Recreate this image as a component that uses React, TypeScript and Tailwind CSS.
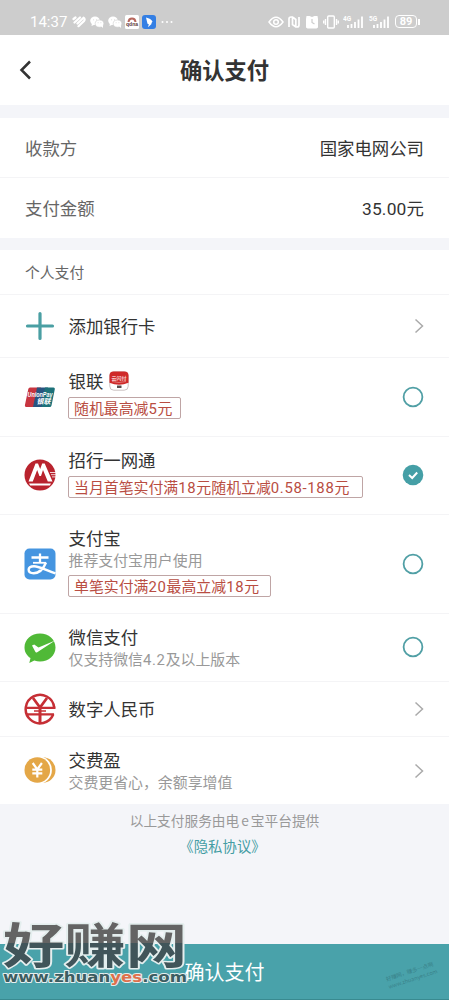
import React, { useState } from "react";

type Method = {
  id: string;
  name: string;
  desc?: string;
  tag?: string;
  tagWidth?: string;
  height: string;
  link?: boolean;
  icon: React.ReactNode;
};

function PlusIcon() {
  return (
    <svg viewBox="0 0 32 32" className="h-8 w-8">
      <path d="M16 3.500v25M3.500 16h25" stroke="#4a9fa3" strokeWidth="3.200" strokeLinecap="round" />
    </svg>
  );
}

function UnionPayIcon() {
  return (
    <svg viewBox="0 0 32 32" className="-mt-px h-8 w-8">
      <path d="M6 6.500h11l-4.500 19.500H2.200q-1.700 0-1.300-1.700L4.300 8q.4-1.500 1.700-1.500z" fill="#c73540" />
      <path d="M13 6.500h11l-5 19.500H9z" fill="#285480" />
      <path d="M21 6.500h8.500q1.700 0 1.300 1.700L27.500 24.500q-.4 1.500-1.700 1.500H17.500z" fill="#1c7179" />
      <text x="3.500" y="15.500" fontSize="7" fontWeight="700" fontStyle="italic" fill="#fff" fontFamily="Liberation Sans, sans-serif" textLength="25" lengthAdjust="spacingAndGlyphs">UnionPay</text>
      <text x="12.500" y="22.500" fontSize="7" fontWeight="700" fontStyle="italic" fill="#fff" fontFamily="'Noto Sans CJK SC', sans-serif">银联</text>
    </svg>
  );
}

function CmbIcon() {
  return (
    <svg viewBox="0 0 32 32" className="-mt-px h-8 w-8">
      <circle cx="16" cy="16" r="15.500" fill="#b9232e" />
      <path d="M26 13.500h6M27 15.700h5M28 17.900h4" stroke="#fff" strokeWidth=".8" />
      <path d="M4.500 22.500 11.500 4.500H14l2.200 5.500 2-5.500h2.500l7.800 18h-4.700L19 11l-2 6h-1.600l-2.200-6-4.400 11.500z" fill="#fff" />
      <path d="M12.800 13.500 9.600 22.200H15zM19 13.500l-2.200 8.700h5.500z" fill="#b9232e" />
      <path d="M5 24.600h22l-1.200 1.900H6.200z" fill="#fff" />
    </svg>
  );
}

function AlipayIcon() {
  return (
    <svg viewBox="0 0 32 32" className="h-8 w-8">
      <rect x=".5" y=".5" width="31" height="31" rx="5" fill="#4595e0" />
      <g fill="none" stroke="#fff" strokeLinecap="butt">
        <path d="M7.500 9.500h17M16 5.500v9.500" strokeWidth="2.300" />
        <path d="M9 14.800h13" strokeWidth="1.800" />
        <path d="M22 14.500c-2 5-5.500 10.700-12.300 10.700-6.400 0-7.200-7 .3-7 5.500 0 12 4 21.500 7.200" strokeWidth="2.400" />
      </g>
    </svg>
  );
}

function WechatPayIcon() {
  return (
    <svg viewBox="0 0 32 32" className="h-8 w-8">
      <path d="M16 1.500C7.300 1.500.5 7.500.5 15.500c0 4.400 2.300 8.200 6 10.600L5.300 31l5-2.400c1.800.6 3.700.9 5.700.9 8.700 0 15.500-6 15.500-14S24.700 1.500 16 1.500z" fill="#50b937" />
      <path d="m8 13.500 2.200-1 4.300 3L31.200 8.500 13.200 20.200q-1.400.7-2-.6z" fill="#fff" />
    </svg>
  );
}

function DigitalYuanIcon() {
  return (
    <svg viewBox="0 0 32 32" className="h-8 w-8" fill="none" stroke="#c62f35">
      <path d="M30.200 14.500A14.300 14.300 0 1 0 29.300 21.300" strokeWidth="2.500" />
      <path d="M9 5 16 14.500 23 5" strokeWidth="2.800" />
      <path d="M2.500 14.800h29M3 21.300h27" strokeWidth="2.300" />
      <path d="M10 18h12" strokeWidth="1.500" />
      <path d="M16 12.500V30" strokeWidth="3" />
      <path d="M24 18h8" stroke="#fff" strokeWidth="1.800" />
    </svg>
  );
}

function CoinIcon() {
  return (
    <svg viewBox="0 0 32 32" className="-mt-px h-8 w-8">
      <circle cx="18.700" cy="16" r="12.800" fill="#e4a747" />
      <circle cx="13.900" cy="16" r="14" fill="#fff" />
      <circle cx="13.300" cy="16" r="12.800" fill="#e4a747" />
      <path d="m8.700 9 4.600 6.300L17.900 9M13.300 15v8.500M8.300 15.700h10M8.300 19.300h10" fill="none" stroke="#fff" strokeWidth="2.200" />
    </svg>
  );
}

function RedPacketIcon() {
  return (
    <svg viewBox="0 0 20 20" className="-mt-px h-5 w-5">
      <rect x=".8" y=".8" width="18.400" height="18.400" rx="4" fill="#fff" stroke="#b4a6a6" strokeWidth=".7" />
      <path d="M4.500.5h11q4 0 4 4v7.200Q10 16 .5 11.700V4.500q0-4 4-4z" fill="#cf2929" />
      <text x="2.500" y="8.500" fontSize="5" fontWeight="700" fill="#f6cccc" fontFamily="'Noto Sans CJK SC', sans-serif">云闪付</text>
      <path d="M3 10.500q7 2 14 0" fill="none" stroke="#eba8a5" strokeWidth=".6" />
      <path d="M8 14.500h4.500V17H8z" fill="#594c4c" />
    </svg>
  );
}

const methods: Method[] = [
  { id: "add", name: "添加银行卡", height: "h-[63px]", link: true, icon: <PlusIcon /> },
  { id: "unionpay", name: "银联", tag: "随机最高减5元", tagWidth: "w-[113px]", height: "h-[79px]", icon: <UnionPayIcon /> },
  { id: "cmb", name: "招行一网通", tag: "当月首笔实付满18元随机立减0.58-188元", tagWidth: "w-[295px]", height: "h-[78px]", icon: <CmbIcon /> },
  { id: "alipay", name: "支付宝", desc: "推荐支付宝用户使用", tag: "单笔实付满20最高立减18元", tagWidth: "w-[203px]", height: "h-[99px]", icon: <AlipayIcon /> },
  { id: "wechat", name: "微信支付", desc: "仅支持微信4.2及以上版本", height: "h-[68px]", icon: <WechatPayIcon /> },
  { id: "ecny", name: "数字人民币", height: "h-[55px]", link: true, icon: <DigitalYuanIcon /> },
  { id: "jfy", name: "交费盈", desc: "交费更省心，余额享增值", height: "h-[68px]", link: true, icon: <CoinIcon /> },
];

// Numbers use a narrower face with wider tracking than the Chinese text
function Mixed({ text }: { text: string }) {
  return (
    <>
      {text.split(/([\d.-]+)/).map((part, i) =>
        i % 2 ? (
          <span key={i} className="font-[Roboto] tracking-[0.045em]">{part}</span>
        ) : (
          part
        )
      )}
    </>
  );
}

function WechatGlyph() {
  return (
    <svg viewBox="0 0 14 12" className="h-3 w-3.5">
      <ellipse cx="5" cy="4.800" rx="4.800" ry="4.200" fill="#fff" />
      <path d="m2 7-.5 3L5 8.500z" fill="#fff" />
      <ellipse cx="9.500" cy="7.600" rx="4.300" ry="3.600" fill="#fff" stroke="#cdcdcd" strokeWidth=".6" />
      <path d="m11 10 2 2v-3z" fill="#fff" />
      <path d="M3.200 3.800h.9M6 3.800h.9M7.700 6.700h.8M10.500 6.700h.8" stroke="#ccc" strokeWidth=".7" />
    </svg>
  );
}

function Signal({ label }: { label: string }) {
  return (
    <svg viewBox="0 0 22 16" className="h-4 w-[22px]" fill="none" stroke="#fff">
      <text x="0" y="6.500" fontSize="6.500" fontWeight="700" fill="#fff" stroke="none" fontFamily="Roboto, sans-serif">{label}</text>
      <path d="M5 11v3M8.500 10v4M12 8v6M15.500 5.500V14M19 2.500V14" strokeWidth="1.800" />
    </svg>
  );
}

function StatusBar() {
  return (
    <div className="flex h-[35px] items-center justify-between bg-[#cdcdcd] pt-2 pr-[29px] pl-[30px] text-white">
      <div className="flex items-center gap-[4px]">
        <span className="w-[38px] font-[Roboto] text-[15px] leading-4">14:37</span>
        <svg viewBox="0 0 14 12" className="h-3 w-3.5" fill="none" stroke="#fff" strokeWidth="2.200" strokeLinecap="round">
          <path d="M1.500 3 3.500 1.500M2.500 6.500 8 1.500M6.500 10.200 12 5Q13.500 3 11.500 1.800L5.500 7.500" />
        </svg>
        <WechatGlyph />
        <WechatGlyph />
        <svg viewBox="0 0 14 14" className="-ml-px h-3.5 w-3.5">
          <rect width="14" height="14" rx="1.500" fill="#fff" />
          <path d="M3.500 7q.3-3.500 3.500-3.500T10.500 7" fill="none" stroke="#b7685e" strokeWidth="2" />
          <text x="1" y="10.500" fontSize="6" fontWeight="700" fill="#5c3a3a" fontFamily="Liberation Sans, sans-serif" textLength="12" lengthAdjust="spacingAndGlyphs">qdna</text>
        </svg>
        <svg viewBox="0 0 14 14" className="-ml-px h-3.5 w-3.5">
          <rect width="14" height="14" rx="3" fill="#347fe4" />
          <path d="M4 2.500q5 1 6.500 4L9.200 8.500l.6.300L6 12.200l.8-3L5.500 8.700z" fill="#fff" />
        </svg>
        <svg viewBox="0 0 12 4" className="ml-px h-1 w-3" fill="#fff">
          <circle cx="1.500" cy="2" r="1" />
          <circle cx="6" cy="2" r="1" />
          <circle cx="10.500" cy="2" r="1" />
        </svg>
      </div>
      <div className="flex items-center gap-[4px]">
        <svg viewBox="0 0 16 12" className="h-3 w-4" fill="none" stroke="#fff" strokeWidth="1.500">
          <path d="M1 6q7-9.500 14 0-7 9.500-14 0z" />
          <circle cx="8" cy="6" r="2.300" />
        </svg>
        <svg viewBox="0 0 12 12" className="h-3 w-3" fill="none" stroke="#fff" strokeWidth="1.700">
          <path d="M1 11V3q0-2 2-2h1.500v7.500L8 11M11 1v8q0 2-2 2H7.800V3.500L4.500 1" />
        </svg>
        <svg viewBox="0 0 14 14" className="ml-px h-3.5 w-3.5">
          <path d="M1.500 1h3L7 2l2.500-1h3L13 4v8.500l-1.500 1h-9L1 12.500V4z" fill="#fff" />
          <path d="M7 4v3.500l2.500 1.500" stroke="#cdcdcd" strokeWidth="1.200" fill="none" />
        </svg>
        <svg viewBox="0 0 16 14" className="h-3.5 w-4" fill="none" stroke="#fff" strokeWidth="1.400">
          <rect x="4.700" y="1" width="6.600" height="12" rx="1" />
          <path d="M2.500 4v6M13.500 4v6M.7 5.500v3M15.300 5.500v3" />
        </svg>
        <Signal label="4G" />
        <Signal label="5G" />
        <div className="flex items-center">
          <span className="flex h-[13px] w-[22px] items-center justify-center rounded-[4px] border border-white font-[Roboto] text-[11px] leading-none font-bold">89</span>
          <span className="ml-px h-[6px] w-[2px] bg-white" />
        </div>
      </div>
    </div>
  );
}

function Radio({ checked }: { checked: boolean }) {
  return (
    <svg viewBox="0 0 22 22" className="-mt-px h-[22px] w-[22px]">
      {checked ? (
        <>
          <circle cx="11" cy="11" r="10.300" fill="#459fa6" />
          <path d="m7 11 3.200 3 5-5.500" fill="none" stroke="#fff" strokeWidth="2" />
        </>
      ) : (
        <circle cx="11" cy="11" r="9.400" fill="#fff" stroke="#509fa5" strokeWidth="1.800" />
      )}
    </svg>
  );
}

function Chevron() {
  return (
    <svg viewBox="0 0 10 16" className="h-4 w-2.5">
      <path d="M1.500 1.500 8.500 8l-7 6.500" fill="none" stroke="#aaa" strokeWidth="1.500" />
    </svg>
  );
}

function Watermark() {
  return (
    <svg viewBox="0 0 194 90" className="pointer-events-none absolute bottom-[4px] left-0 h-[90px] w-[194px]">
      <defs>
        <linearGradient id="ink" gradientUnits="userSpaceOnUse" x1="0" y1="16" x2="0" y2="72">
          <stop offset=".47" stopColor="#646464" />
          <stop offset=".47" stopColor="#41555a" />
        </linearGradient>
      </defs>
      <g stroke="#e4eeee" strokeLinejoin="round" paintOrder="stroke">
        <text x="3" y="64.500" transform="scale(1 .88)" fontSize="54" fontWeight="700" fill="url(#ink)" strokeWidth="3.500" fontFamily="'Noto Sans CJK SC', sans-serif" textLength="184" lengthAdjust="spacingAndGlyphs">好赚网</text>
        <text x="3" y="75.500" fontSize="14" fontWeight="700" fill="#3c5d61" strokeWidth="2" fontFamily="'DejaVu Sans', sans-serif" textLength="184" lengthAdjust="spacingAndGlyphs">
          www.zhuan<tspan fill="#de704c">yes</tspan>.com
        </text>
      </g>
    </svg>
  );
}

export default function App() {
  const [selected, setSelected] = useState("cmb");

  return (
    <div className="relative flex h-[1000px] w-[449px] flex-col overflow-hidden bg-[#f4f5f9] font-['Noto_Sans_CJK_SC',sans-serif] text-[17.4px] leading-6 text-[#333]">
      <StatusBar />

      <header className="grid h-[70px] grid-cols-[60px_1fr_60px] items-center bg-white">
        <svg viewBox="0 0 14 20" className="ml-[19px] h-5 w-3.5">
          <path d="M11 1.500 2.500 10l8.500 8.500" fill="none" stroke="#333" strokeWidth="2.500" />
        </svg>
        <h1 className="pb-[2px] text-center text-[22.300px] leading-8 font-bold">确认支付</h1>
      </header>

      {/* Order summary */}
      <section className="mt-[13px] bg-white">
        <div className="flex h-[60px] items-center justify-between border-b border-[#f4f4f6] px-[25px]">
          <span className="text-[#666]">收款方</span>
          <span>国家电网公司</span>
        </div>
        <div className="flex h-[60px] items-center justify-between px-[25px]">
          <span className="text-[#666]">支付金额</span>
          <span>
            <span className="font-[Roboto] tracking-[0.2px]">35.00</span>元
          </span>
        </div>
      </section>

      {/* Payment methods */}
      <section className="mt-3 bg-white">
        <h2 className="flex h-11 items-center pl-[25px] text-[14.8px] text-[#666]">个人支付</h2>
        {methods.map((m) => (
          <div
            key={m.id}
            onClick={() => !m.link && setSelected(m.id)}
            className={`flex items-center border-t border-[#f4f4f6] pr-[25px] pl-6 ${m.height}`}
          >
            {m.icon}
            <div className={`ml-3 flex flex-1 flex-col ${m.tag ? "pb-[6px]" : ""}`}>
              <div className="flex h-6 items-center gap-1.5 pl-[0.5px]">
                {m.name}
                {m.id === "unionpay" && <RedPacketIcon />}
              </div>
              {m.desc && (
                <div className="h-[21px] pl-[0.5px] text-[14.9px] leading-5 text-[#999]">
                  <Mixed text={m.desc} />
                </div>
              )}
              {m.tag && (
                <div className={`mt-[4px] h-[22px] rounded-[2px] border border-[#bfa5a5] pl-[5px] text-[14.9px] leading-5 whitespace-nowrap text-[#b94d42] ${m.tagWidth}`}>
                  <Mixed text={m.tag} />
                </div>
              )}
            </div>
            {m.link ? <Chevron /> : <Radio checked={selected === m.id} />}
          </div>
        ))}
      </section>

      <footer className="flex flex-1 flex-col items-center pt-[5px] text-[#999]">
        <p className="text-[13.7px] leading-[22px]">以上支付服务由电<span className="px-[2px]">e</span>宝平台提供</p>
        <a className="mt-1 mr-1 text-[14.400px] leading-[22px] text-[#459da4]">《隐私协议》</a>
      </footer>

      <button className="relative h-14 w-full border-b border-[#398a90] bg-[#49a2aa] text-[20px] text-white">
        确认支付
        <span className="absolute top-[23px] right-[11px] w-[52px] -rotate-[18deg] text-left text-[5.5px] leading-[8px] whitespace-nowrap text-[#3a838b]">
          好赚网，赚多一点啊
          <br />
          www.zhuanyes.com
        </span>
      </button>
      <Watermark />
    </div>
  );
}
